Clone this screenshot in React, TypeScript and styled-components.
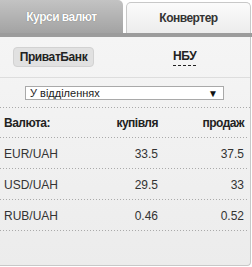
import styled, { createGlobalStyle } from "styled-components";

const GlobalStyle = createGlobalStyle`
  body {
    margin: 0;
    background: #ffffff;
    font-family: "Liberation Sans", Arial, sans-serif;
    color: #333333;
  }
`;

const Widget = styled.div`
  width: 252px;
  height: 267px;
  display: flex;
  flex-direction: column;
`;

const Tabs = styled.div`
  display: flex;
  align-items: flex-end;
  gap: 3px;
  height: 33px;
  padding-right: 1px;
  border-bottom: 4px solid #9c9c9c;
`;

const Tab = styled.div<{ $active?: boolean }>`
  flex: 1;
  display: flex;
  align-items: center;
  justify-content: center;
  font-size: 12px;
  font-weight: bold;
  letter-spacing: -0.5px;
  border-radius: 0 5px 0 0;
  ${(p) =>
    p.$active
      ? `
    height: 33px;
    color: #ffffff;
    text-shadow: 0 0 1px rgba(0, 0, 0, 0.45);
    background: linear-gradient(#c3c3c3, #a3a3a3);
  `
      : `
    height: 31px;
    color: #333333;
    border: 1px solid #c8c8c8;
    border-bottom: none;
    border-radius: 5px 5px 0 0;
    box-sizing: border-box;
    background: linear-gradient(#fbfbfb, #ececec);
  `}
`;

const Panel = styled.div`
  flex: 1;
  display: flex;
  flex-direction: column;
  margin-right: 1px;
  margin-bottom: 1px;
  border-right: 1px solid #c8c8c8;
  border-bottom: 1px solid #c8c8c8;
  border-radius: 0 0 4px 0;
  background: linear-gradient(#f5f5f5, #ececec);
`;

const Sources = styled.div`
  display: flex;
  align-items: center;
  height: 40px;
  padding: 0 0 0 13px;
  border-bottom: 1px solid #dddddd;
`;

const SourceButton = styled.div<{ $active?: boolean }>`
  font-size: 12px;
  font-weight: bold;
  letter-spacing: -0.4px;
  color: #222222;
  ${(p) =>
    p.$active
      ? `
    width: 81px;
    height: 20px;
    box-sizing: border-box;
    display: flex;
    align-items: center;
    justify-content: center;
    background: #e1e1e1;
    border: 1px solid #d2d2d2;
    border-radius: 4px;
  `
      : `
    margin-left: 79px;
    padding-bottom: 2px;
    border-bottom: 1px dashed #222222;
  `}
`;

const SelectRow = styled.div`
  height: 30px;
  display: flex;
  align-items: center;
  padding-left: 25px;
  background: linear-gradient(to right, #aaaaaa 1px, transparent 1px) repeat-x left bottom / 3px 1px;
`;

const Select = styled.div`
  width: 199px;
  height: 14px;
  box-sizing: border-box;
  display: flex;
  align-items: center;
  justify-content: space-between;
  padding: 0 5px 0 4px;
  background: #ffffff;
  border: 1px solid #a9a9a9;
  font-size: 11px;
  color: #222222;
`;

const Arrow = styled.span`
  font-size: 10px;
  color: #111111;
`;

const Row = styled.div<{ $head?: boolean }>`
  display: grid;
  grid-template-columns: 1fr 60px 86px;
  align-items: center;
  height: ${(p) => (p.$head ? 30 : 31)}px;
  padding: 0 5px 0 4px;
  margin-right: 1px;
  font-size: 12px;
  font-weight: ${(p) => (p.$head ? "bold" : "normal")};
  letter-spacing: ${(p) => (p.$head ? "-0.5px" : "0")};
  color: ${(p) => (p.$head ? "#222222" : "#333333")};
  background: linear-gradient(to right, #aaaaaa 1px, transparent 1px) repeat-x left bottom / 3px 1px;
`;

const Num = styled.span`
  text-align: right;
`;

const rates = [
  { pair: "EUR/UAH", buy: "33.5", sell: "37.5" },
  { pair: "USD/UAH", buy: "29.5", sell: "33" },
  { pair: "RUB/UAH", buy: "0.46", sell: "0.52" },
];

export default function App() {
  return (
    <>
      <GlobalStyle />
      <Widget>
        <Tabs>
          <Tab $active>Курси валют</Tab>
          <Tab>Конвертер</Tab>
        </Tabs>
        <Panel>
          <Sources>
            <SourceButton $active>ПриватБанк</SourceButton>
            <SourceButton>НБУ</SourceButton>
          </Sources>
          <SelectRow>
            <Select>
              <span>У відділеннях</span>
              <Arrow>▼</Arrow>
            </Select>
          </SelectRow>
          <Row $head>
            <span>Валюта:</span>
            <Num>купівля</Num>
            <Num>продаж</Num>
          </Row>
          {rates.map((r) => (
            <Row key={r.pair}>
              <span>{r.pair}</span>
              <Num>{r.buy}</Num>
              <Num>{r.sell}</Num>
            </Row>
          ))}
        </Panel>
      </Widget>
    </>
  );
}
